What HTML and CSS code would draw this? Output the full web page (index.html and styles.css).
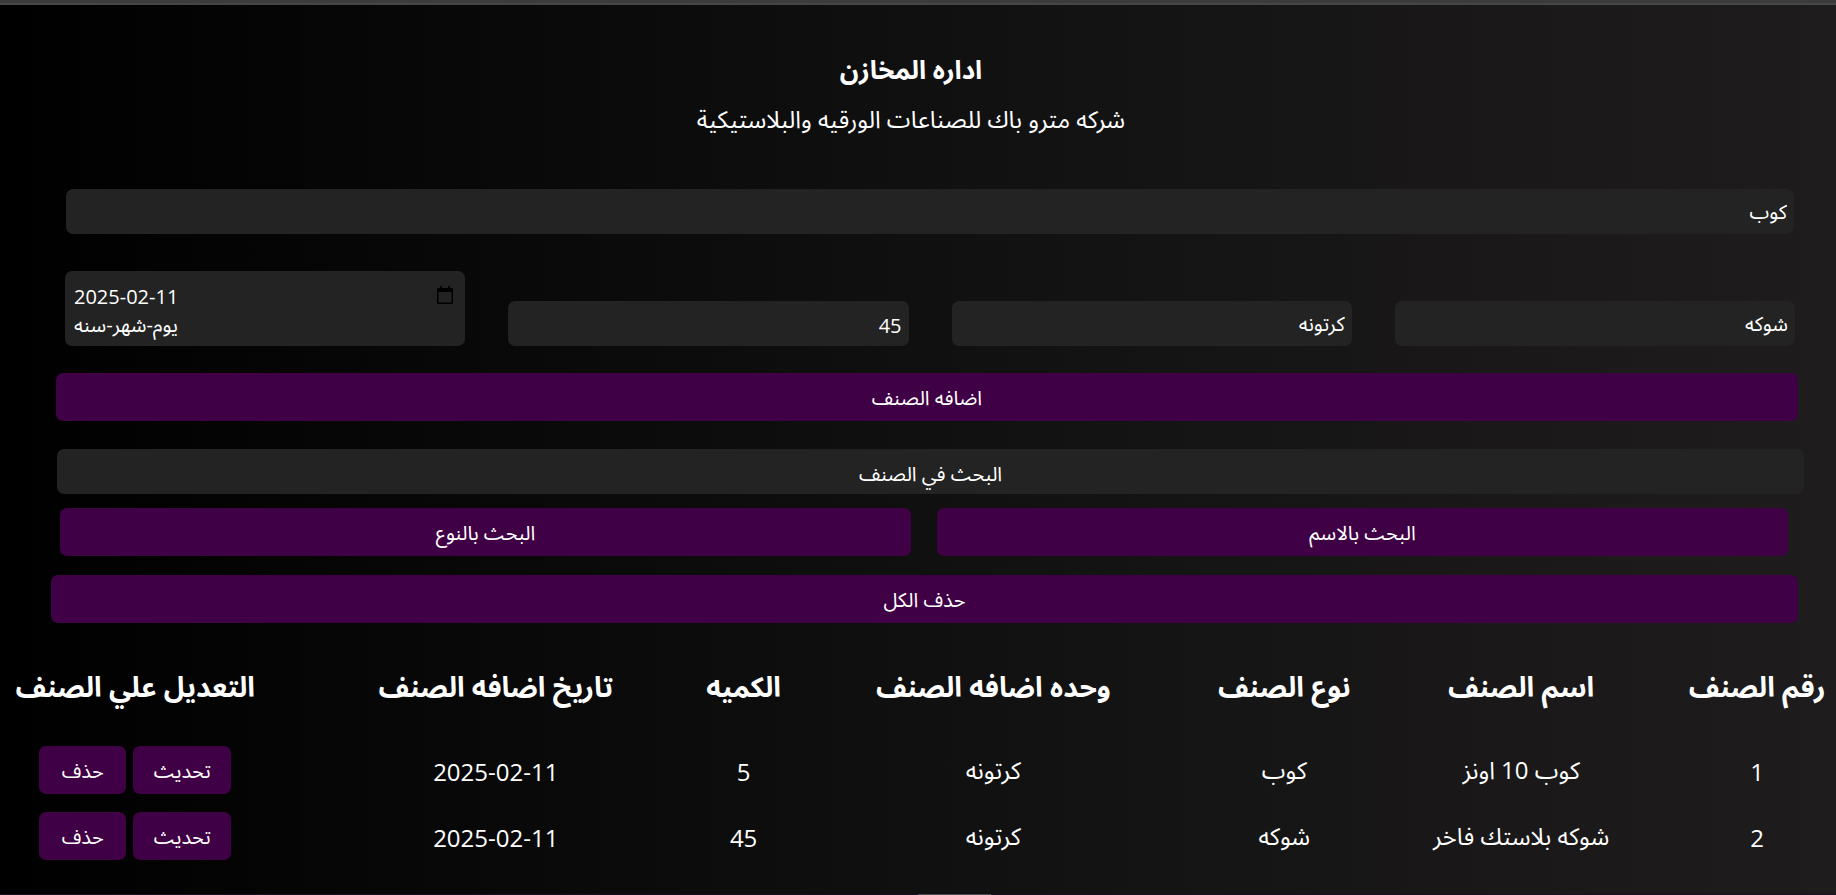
FILE: index.html
```
<!DOCTYPE html>
<html lang="ar" dir="rtl">
<head>
<meta charset="utf-8">
<title>اداره المخازن</title>
<link rel="stylesheet" href="styles.css">
</head>
<body>
<div class="topbar"></div>
<header class="header">
  <h1 class="title">اداره المخازن</h1>
  <p class="subtitle">شركه مترو باك للصناعات الورقيه والبلاستيكية</p>
</header>
<main class="main">
  <form class="form">
    <input class="field name-field" type="text" aria-label="اسم الصنف" value="كوب">
    <div class="details">
      <input class="field" type="text" aria-label="نوع الصنف" value="شوكه">
      <input class="field" type="text" aria-label="وحده اضافه الصنف" value="كرتونه">
      <input class="field" type="text" aria-label="الكميه" value="45">
      <div class="date-field" dir="ltr">
        <div class="date-row">
          <input class="date-input" id="date" type="text" value="2025-02-11">
          <button class="calendar" type="button" aria-label="اختيار التاريخ">
            <svg width="16" height="18" viewBox="0 0 16 18"><path fill="#000" fill-rule="evenodd" d="M3 0h2v2h6V0h2v2h1.500q1.500 0 1.500 1.500v13q0 1.500-1.500 1.500h-13Q0 18 0 16.500v-13Q0 2 1.500 2H3zM1.500 6v10.500h13V6z"/></svg>
          </button>
        </div>
        <label class="date-label" for="date" dir="rtl">يوم-شهر-سنه</label>
      </div>
    </div>
    <button class="btn add" type="button">اضافه الصنف</button>
  </form>
  <section class="search">
    <input class="field search-field" type="text" aria-label="البحث في الصنف" placeholder="البحث في الصنف">
    <div class="search-actions">
      <button class="btn" type="button">البحث بالاسم</button>
      <button class="btn" type="button">البحث بالنوع</button>
    </div>
    <button class="btn delete-all" type="button">حذف الكل</button>
  </section>
  <table class="items">
    <colgroup>
      <col class="c-id"><col class="c-name"><col class="c-type"><col class="c-unit"><col class="c-count"><col class="c-date"><col class="c-edit">
    </colgroup>
    <thead>
      <tr><th>رقم الصنف</th><th>اسم الصنف</th><th>نوع الصنف</th><th>وحده اضافه الصنف</th><th>الكميه</th><th>تاريخ اضافه الصنف</th><th class="edit">التعديل علي الصنف</th></tr>
    </thead>
    <tbody>
      <tr><td>1</td><td>كوب 10 اونز</td><td>كوب</td><td>كرتونه</td><td>5</td><td><bdi dir="ltr">2025-02-11</bdi></td>
        <td class="edit"><div class="actions"><button class="btn update" type="button">تحديث</button><button class="btn delete" type="button">حذف</button></div></td></tr>
      <tr><td>2</td><td>شوكه بلاستك فاخر</td><td>شوكه</td><td>كرتونه</td><td>45</td><td><bdi dir="ltr">2025-02-11</bdi></td>
        <td class="edit"><div class="actions"><button class="btn update" type="button">تحديث</button><button class="btn delete" type="button">حذف</button></div></td></tr>
    </tbody>
  </table>
</main>
<footer class="edge"><div class="edge-handle"></div></footer>
</body>
</html>
```
FILE: styles.css
```
* { box-sizing: border-box; }
body {
  margin: 0;
  min-height: 100vh;
  display: flex;
  flex-direction: column;
  color: #fff;
  background: linear-gradient(90deg, #000, #040404 12%, #101010 50%, #151515 66%, #191717 78%, #1e1c1c);
  font-family: "Open Sans", "Noto Sans Arabic", "DejaVu Sans", sans-serif;
  font-size: 24px;
}
input, button { font: inherit; color: inherit; border: 0; }
.topbar { height: 5px; background: #3c3c3c; border-bottom: 2px solid #464646; }
.header { padding: 44px 28px 0 14px; text-align: center; }
.title { margin: 0; font-size: 26px; line-height: 40px; }
.subtitle { margin: 12px 0 0; font-size: 24px; line-height: 36px; }
.form { padding: 52px 38px 0 56px; }
.field {
  display: block;
  width: 100%;
  min-width: 0;
  height: 45px;
  padding: 3px 7px 0;
  border-radius: 7px;
  background: #232323;
  font-size: 20px;
}
.name-field { width: calc(100% - 14px); margin: 0 4px 37px; }
.details {
  display: grid;
  grid-template-columns: repeat(4, 1fr);
  gap: 43px;
  align-items: end;
  padding: 0 3px 0 9px;
}
.date-field { padding: 10px 12px 4px 9px; height: 75px; border-radius: 7px; background: #232323; font-size: 20px; }
.date-row { display: flex; justify-content: space-between; height: 29px; }
.date-input { flex: 1; min-width: 0; padding: 2px 0 0; background: none; }
.calendar { padding: 5px 0 0; background: none; height: 23px; }
.calendar svg { display: block; }
.date-label { display: block; line-height: 29px; text-align: left; }
.btn {
  height: 48px;
  padding: 3px 0 0;
  border-radius: 7px;
  background: #400045;
  font-size: 20px;
}
.add { display: block; width: 100%; margin-top: 27px; }
.search { padding: 28px 32px 0 51px; }
.search-field { width: calc(100% - 6px); text-align: center; }
.search-field::placeholder { color: #fff; opacity: 1; }
.search-actions { display: grid; grid-template-columns: 1fr 1fr; gap: 26px; margin: 14px 16px 19px 9px; }
.delete-all { display: block; width: calc(100% - 6px); margin-right: 6px; }
.items { width: 100%; margin-top: 27px; table-layout: fixed; border-collapse: collapse; }
.items th { height: 87px; padding: 0 0 10px; font-size: 28px; white-space: nowrap; }
.items td { height: 66px; padding: 2px 0 0; text-align: center; white-space: nowrap; }
.items .edit { padding-right: 16px; }
.items td.edit { padding-top: 0; }
.c-id { width: 8.6%; }
.c-name { width: 17.1%; }
.c-type { width: 8.7%; }
.c-unit { width: 23%; }
.c-count { width: 4.2%; }
.c-date { width: 22.8%; }
.actions { display: flex; justify-content: center; gap: 7px; }
.update { width: 98px; }
.delete { width: 87px; }
.edge { height: 1px; margin-top: auto; background: #190d2c; }
.edge-handle { width: 4%; height: 1px; margin-right: 46%; background: #4d4a52; }
```
